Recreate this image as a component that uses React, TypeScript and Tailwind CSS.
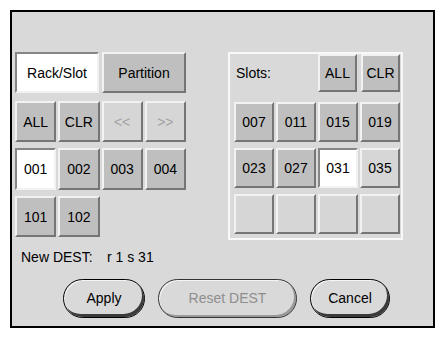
import React from "react";

type Tone = "gray" | "white" | "flat" | "disabled";

const raised = "border-2 border-t-[#f2f2f2] border-l-[#f2f2f2] border-r-[#757575] border-b-[#757575]";
const sunken = "border-2 border-t-[#858585] border-l-[#858585] border-r-[#f2f2f2] border-b-[#f2f2f2]";

function Key({ label = "", tone = "gray", className = "" }: { label?: string; tone?: Tone; className?: string }) {
  const face =
    tone === "white"
      ? `bg-white text-black ${sunken}`
      : tone === "gray"
        ? `bg-[#bfbfbf] text-black ${raised}`
        : tone === "disabled"
          ? `bg-[#d6d6d6] text-[#a3a3a3] ${raised}`
          : `bg-[#d6d6d6] text-black ${raised}`;
  return (
    <div className={`flex items-center justify-center text-[14px] leading-none ${face} ${className}`}>
      {label}
    </div>
  );
}

function Pill({ label, disabled = false, className = "" }: { label: string; disabled?: boolean; className?: string }) {
  return (
    <div
      className={`flex h-[39px] items-center justify-center rounded-full border text-[14px] ${
        disabled
          ? "border-[#333] text-[#8e8e8e] shadow-[inset_1px_1px_0_#f4f4f4,inset_-2px_-2px_0_#9a9a9a]"
          : "border-black text-black shadow-[inset_1px_1px_0_#f4f4f4,inset_-2px_-3px_0_#3a3a3a]"
      } ${className}`}
    >
      {label}
    </div>
  );
}

export default function App() {
  const slots: { label: string; tone: Tone }[] = [
    { label: "007", tone: "gray" },
    { label: "011", tone: "gray" },
    { label: "015", tone: "gray" },
    { label: "019", tone: "gray" },
    { label: "023", tone: "gray" },
    { label: "027", tone: "gray" },
    { label: "031", tone: "white" },
    { label: "035", tone: "flat" },
    { label: "", tone: "flat" },
    { label: "", tone: "flat" },
    { label: "", tone: "flat" },
    { label: "", tone: "flat" },
  ];

  return (
    <div className="h-[338px] w-[445px] bg-white pl-[10px] pt-[10px] font-['Liberation_Sans',Arial,sans-serif]">
      <div className="h-[318px] w-[425px] border-2 border-black bg-[#d9d9d9] pl-[3px] pt-[40px]">
        <div className="flex items-start">
          {/* left column */}
          <div className="flex w-[171px] flex-col">
            <div className="flex gap-[3px]">
              <Key label="Rack/Slot" tone="white" className="h-[41px] w-[84px]" />
              <Key label="Partition" className="h-[41px] w-[84px]" />
            </div>
            <div className="mt-[8px] grid grid-cols-4 gap-[2px]">
              <Key label="ALL" className="h-[41px]" />
              <Key label="CLR" className="h-[41px]" />
              <Key label="<<" tone="disabled" className="h-[41px]" />
              <Key label=">>" tone="disabled" className="h-[41px]" />
            </div>
            <div className="mt-[6px] grid grid-cols-4 gap-[2px]">
              <Key label="001" tone="white" className="h-[42px]" />
              <Key label="002" className="h-[42px]" />
              <Key label="003" className="h-[42px]" />
              <Key label="004" className="h-[42px]" />
            </div>
            <div className="mt-[6px] grid grid-cols-4 gap-[2px]">
              <Key label="101" className="h-[41px]" />
              <Key label="102" className="h-[41px]" />
            </div>
          </div>

          {/* slots panel */}
          <div className="ml-[42px] h-[188px] w-[175px] border-2 border-[#f8f8f8] pb-[3px] pl-[4px] pr-[1px]">
            <div className="flex h-[38px] items-center">
              <span className="ml-[2px] flex-1 text-[14px] text-black">Slots:</span>
              <div className="flex gap-[4px]">
                <Key label="ALL" className="h-[38px] w-[39px]" />
                <Key label="CLR" className="h-[38px] w-[39px]" />
              </div>
            </div>
            <div className="mt-[10px] grid grid-cols-4 gap-x-[2px] gap-y-[6px]">
              {slots.map((s, i) => (
                <Key key={i} label={s.label} tone={s.tone} className="h-[40px]" />
              ))}
            </div>
          </div>
        </div>

        <div className="ml-[6px] mt-[9px] flex h-[16px] items-center text-[14px] text-black">
          <span className="w-[86px]">New DEST:</span>
          <span>r 1 s 31</span>
        </div>

        <div className="ml-[48px] mt-[14px] flex gap-[13px]">
          <Pill label="Apply" className="w-[82px]" />
          <Pill label="Reset DEST" disabled className="w-[139px]" />
          <Pill label="Cancel" className="w-[80px]" />
        </div>
      </div>
    </div>
  );
}
